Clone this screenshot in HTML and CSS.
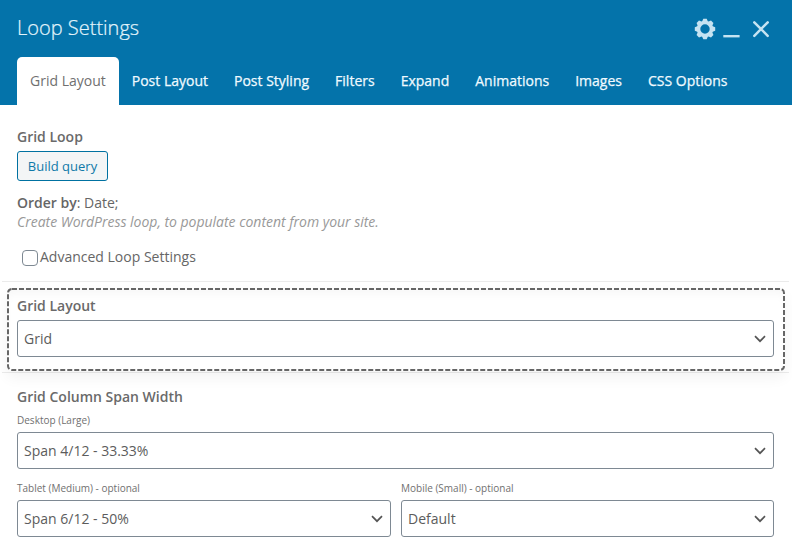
FILE: index.html
```html
<!DOCTYPE html>
<html lang="en">
<head>
<meta charset="utf-8">
<title>Loop Settings</title>
<link rel="stylesheet" href="styles.css">
</head>
<body>
<header class="panel-header">
  <div class="title-row">
    <h1>Loop Settings</h1>
    <div class="controls">
      <svg width="22" height="22" viewBox="-11 -11 22 22"><g fill="currentColor"><path fill-rule="evenodd" d="M-8 0a8 8 0 1 0 16 0a8 8 0 1 0 -16 0M-4.7 0a4.7 4.7 0 1 1 9.4 0a4.7 4.7 0 1 1 -9.4 0"/><path id="tooth" d="M-3.3-6.5L-1.7-10.2H1.7L3.3-6.5z"/><use href="#tooth" transform="rotate(45)"/><use href="#tooth" transform="rotate(90)"/><use href="#tooth" transform="rotate(135)"/><use href="#tooth" transform="rotate(180)"/><use href="#tooth" transform="rotate(225)"/><use href="#tooth" transform="rotate(270)"/><use href="#tooth" transform="rotate(315)"/></g></svg>
      <svg width="18" height="22" viewBox="0 0 18 22"><path d="M1.3 18.2H17.6" stroke="currentColor" stroke-width="2.4"/></svg>
      <svg width="18" height="22" viewBox="0 0 18 22"><path d="M2.3 4.4L15.7 17.8M15.7 4.4L2.3 17.8" stroke="currentColor" stroke-width="2.5" stroke-linecap="round"/></svg>
    </div>
  </div>
  <nav class="tabs">
    <span class="tab active">Grid Layout</span><span class="tab">Post Layout</span><span class="tab">Post Styling</span><span class="tab">Filters</span><span class="tab">Expand</span><span class="tab">Animations</span><span class="tab">Images</span><span class="tab">CSS Options</span>
  </nav>
</header>
<main>
  <section class="param loop">
    <h2>Grid Loop</h2>
    <button class="build">Build query</button>
    <p class="order"><b>Order by</b>: Date;</p>
    <p class="hint">Create WordPress loop, to populate content from your site.</p>
    <label class="check"><input type="checkbox"><span>Advanced Loop Settings</span></label>
  </section>
  <section class="param layout">
    <div class="highlight">
      <svg class="dashes"><rect x="1" y="1" width="776" height="81" rx="4"/></svg>
      <h2>Grid Layout</h2>
      <div class="select">Grid<svg width="12" height="8" viewBox="0 0 12 8"><path d="M1 1.2L6 6.2L11 1.2"/></svg></div>
    </div>
  </section>
  <section class="param spans">
    <h2>Grid Column Span Width</h2>
    <div class="field"><small>Desktop (Large)</small>
      <div class="select">Span 4/12 - 33.33%<svg width="12" height="8" viewBox="0 0 12 8"><path d="M1 1.2L6 6.2L11 1.2"/></svg></div></div>
    <div class="pair">
      <div class="field"><small>Tablet (Medium) - optional</small>
        <div class="select">Span 6/12 - 50%<svg width="12" height="8" viewBox="0 0 12 8"><path d="M1 1.2L6 6.2L11 1.2"/></svg></div></div>
      <div class="field"><small>Mobile (Small) - optional</small>
        <div class="select">Default<svg width="12" height="8" viewBox="0 0 12 8"><path d="M1 1.2L6 6.2L11 1.2"/></svg></div></div>
    </div>
  </section>
</main>
</body>
</html>
```
FILE: styles.css
```css
* { box-sizing: border-box; }
body { margin: 0; background: #fff; color: #666; font: 14px/20px "Open Sans", sans-serif; overflow: hidden; }
h1, h2, p { margin: 0; }
.panel-header { height: 105px; background: #0473aa; color: #fff; }
.title-row { height: 57px; padding: 0 22px 0 17px; display: flex; justify-content: space-between; }
h1 { font-size: 20px; font-weight: 300; line-height: 56px; color: #e4f5fc; -webkit-text-stroke: 0.2px; }
.controls { display: flex; height: 22px; margin-top: 18px; color: #c5e3f2; }
.controls svg + svg { margin-left: 6px; }
.controls svg:last-child { margin-left: 12px; }
.tabs { display: flex; height: 48px; padding-left: 17px; }
.tab { padding: 0 13px; line-height: 48px; font-size: 14px; white-space: nowrap; color: #f0faff; -webkit-text-stroke: 0.25px; }
.tab.active { background: #fff; color: #707070; border-radius: 5px 5px 0 0; -webkit-text-stroke: 0; }
main { padding: 0 3px 0 2px; }
h2 { font-size: 14px; font-weight: 600; line-height: 20px; color: #6a6a6a; }
.param { border-bottom: 1px solid #ebebeb; }
.loop { height: 177px; padding: 22px 15px 0; }
.build { display: block; width: 91px; height: 30px; margin-top: 4px; padding: 0; border: 1px solid #0071a1; border-radius: 3px; background: #f3f5f6; color: #0f79a8; font: 13px/28px "Open Sans", sans-serif; }
.order { margin-top: 12px; line-height: 20px; }
.order b { font-weight: 600; }
.hint { font-style: italic; color: #999; line-height: 18px; letter-spacing: -0.02px; }
.check { display: flex; align-items: center; height: 20px; margin-top: 16px; padding-left: 5px; }
.check input { appearance: none; width: 16px; height: 16px; margin: 2px 2px 0 0; border: 1px solid #7e8993; border-radius: 4px; background: #fff; }
.layout { height: 91px; padding: 6px 4px 0 5px; }
.highlight { position: relative; height: 83px; padding: 8px 11px 0 10px; border-radius: 5px; box-shadow: 0 7px 14px rgba(0,0,0,.05), inset 0 8px 10px -2px rgba(0,0,0,.035); }
.dashes { position: absolute; inset: 0; width: 100%; height: 100%; fill: none; stroke: #666; stroke-width: 2; stroke-dasharray: 5 2; }
.select { display: flex; align-items: center; justify-content: space-between; height: 37px; padding: 0 7px 0 6px; border: 1px solid #7e8993; border-radius: 3px; background: #fff; color: #5c5c5c; }
.select svg { fill: none; stroke: #555; stroke-width: 1.7; }
.highlight .select { position: relative; margin-top: 4px; }
.spans { padding: 14px 15px 0 15px; border: 0; }
small { display: block; height: 16px; line-height: 14px; font-size: 10px; color: #707070; }
.spans .field { padding-top: 6px; }
.spans .select { margin-top: 3px; }
.pair { display: grid; grid-template-columns: 374px 373px; gap: 10px; margin-top: 6px; }
```
